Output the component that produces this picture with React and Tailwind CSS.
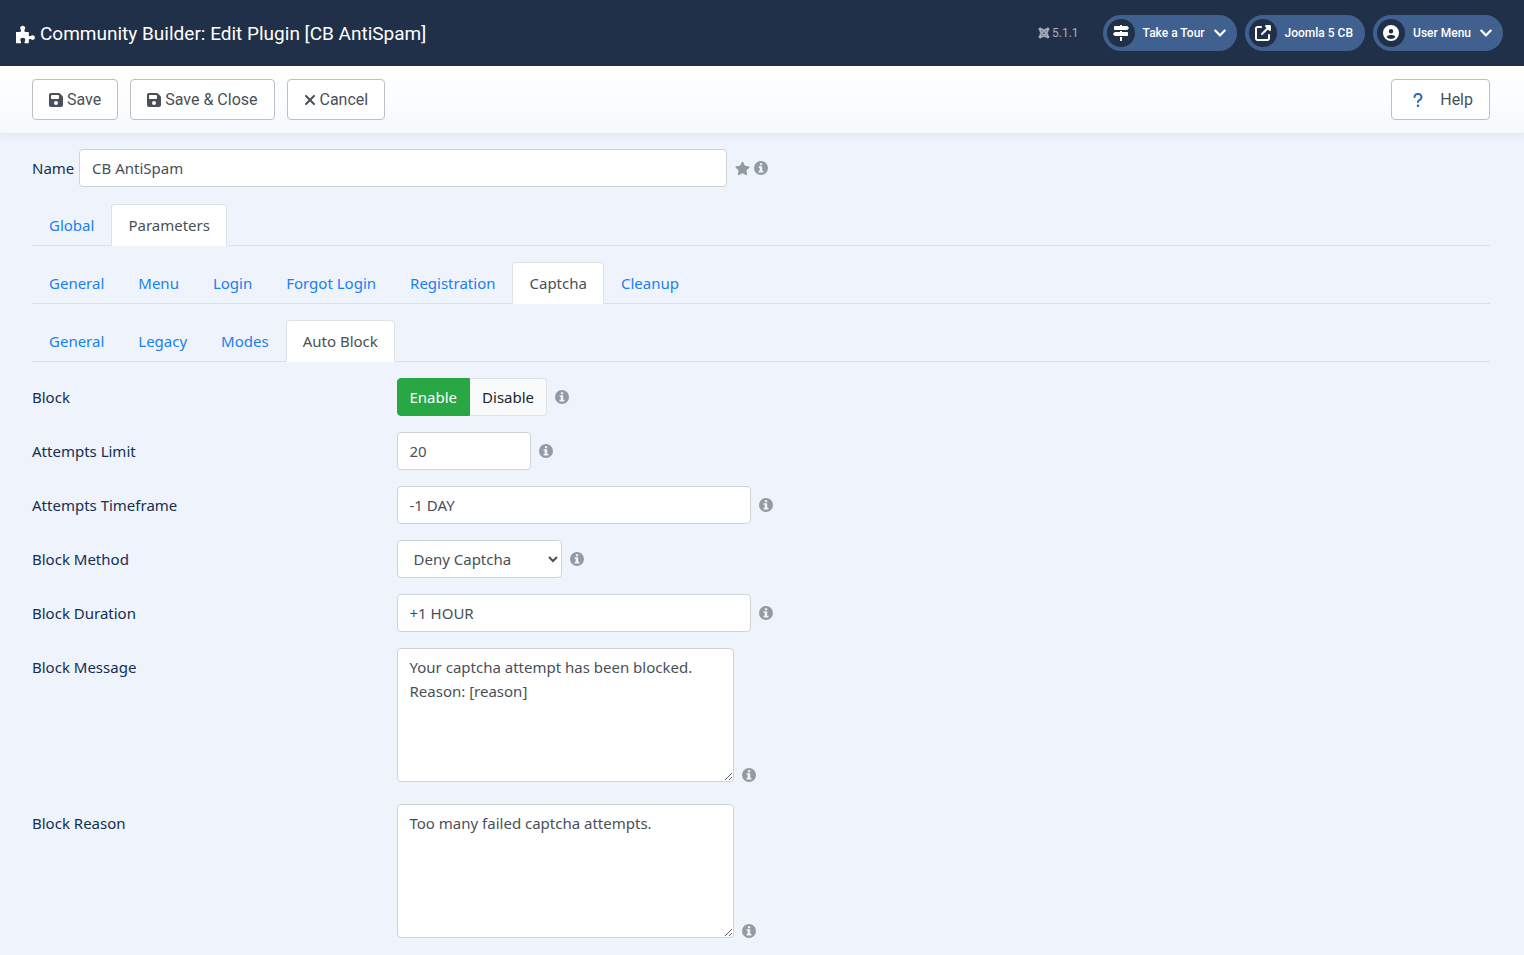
import { FaChevronDown, FaJoomla, FaMapSigns, FaStar } from "react-icons/fa";
import {
  FaCircleUser,
  FaFloppyDisk,
  FaQuestion,
  FaUpRightFromSquare,
  FaXmark,
} from "react-icons/fa6";

const mainTabs = ["Global", "Parameters"];
const parameterTabs = [
  "General",
  "Menu",
  "Login",
  "Forgot Login",
  "Registration",
  "Captcha",
  "Cleanup",
];
const captchaTabs = ["General", "Legacy", "Modes", "Auto Block"];

const fieldClass =
  "h-[38px] rounded border border-[#ced4da] bg-white px-3 text-[#495057]";

function InfoIcon() {
  return (
    <svg
      viewBox="0 0 14 14"
      fill="currentColor"
      fillRule="evenodd"
      className="size-3.5 shrink-0 text-[#939ba2]"
      aria-hidden="true"
    >
      <path d="M7 0a7 7 0 1 1 0 14A7 7 0 0 1 7 0ZM5.9 2.2v2h2.3v-2ZM4.6 5.3v1.5h1.1v3H4.6v1.6h4.8V9.8H8.2V5.3Z" />
    </svg>
  );
}

function PuzzleIcon() {
  return (
    <svg
      viewBox="0 0 20 20"
      fill="currentColor"
      className="size-5"
      aria-hidden="true"
    >
      <path d="M0 8h3.2c1.6 0 2.2-.7 1.8-1.7-.4-.8-.8-1.3-.8-2.2C4.200 2.700 5.300 1.800 6.700 1.800s2.500.9 2.500 2.300c0 .9-.5 1.400-.8 2.200C8 7.300 8.600 8 10 8h2.800v2.900c0 1.200.7 1.600 1.700 1.200.7-.3 1.200-.8 2.100-.8 1.400 0 2.300 1 2.300 2.300s-.9 2.300-2.300 2.300c-.9 0-1.400-.5-2.100-.8-1-.4-1.700.1-1.700 1.200V19.200H8.600v-1.100c0-.9.700-1.300.7-2.300 0-1.300-1.100-2.100-2.500-2.100s-2.500.8-2.500 2.100c0 1 .7 1.400.7 2.300v1.100H0Z" />
    </svg>
  );
}

function HeaderPill({ icon, label, hasMenu }) {
  return (
    <button
      type="button"
      className="flex h-9 items-center rounded-full bg-[#40618f] pr-2.5 pl-1 text-xs font-medium text-white"
    >
      <span className="flex size-7 items-center justify-center rounded-full bg-[#1f3048]">
        {icon}
      </span>
      <span className="mx-2">{label}</span>
      {hasMenu && <FaChevronDown className="size-3.5" />}
    </button>
  );
}

function HeaderLink({ icon, label }) {
  return (
    <a
      href="#"
      className="flex h-9 items-center gap-2 rounded-full bg-[#40618f] pr-3 pl-1 text-xs font-medium text-white"
    >
      <span className="flex size-7 items-center justify-center rounded-full bg-[#1f3048]">
        {icon}
      </span>
      {label}
    </a>
  );
}

function ToolbarButton({ children }) {
  return (
    <button
      type="button"
      className="flex h-[41px] items-center gap-1 rounded border border-[#bcc0c5] bg-white px-4 text-[#495057]"
    >
      {children}
    </button>
  );
}

function Tabs({ tabs, active, label }) {
  return (
    <nav aria-label={label} className="flex border-b border-[#dbdfe6]">
      {tabs.map((tab) => (
        <a
          key={tab}
          href="#"
          className={
            tab === active
              ? "-mb-px rounded-t border border-[#dee2e6] border-b-white bg-white px-4 py-2 text-[#495057]"
              : "-mb-px border border-transparent px-4 py-2 text-[#1a7ff0]"
          }
        >
          {tab}
        </a>
      ))}
    </nav>
  );
}

function FormRow({ id, label, children }) {
  return (
    <div className="flex">
      <label htmlFor={id} className="w-1/4 shrink-0 pt-[7px]">
        {label}
      </label>
      <div className="flex items-center gap-2">{children}</div>
    </div>
  );
}

function TextareaRow({ id, label, value }) {
  return (
    <div className="flex pb-1.5">
      <label htmlFor={id} className="w-1/4 shrink-0 pt-[7px]">
        {label}
      </label>
      <div className="flex items-end gap-2">
        <textarea
          id={id}
          defaultValue={value}
          className="block h-[134px] w-[337px] rounded border border-[#ced4da] bg-white px-3 py-1.5 text-[#495057]"
        />
        <InfoIcon />
      </div>
    </div>
  );
}

function App() {
  return (
    <div className="min-h-screen bg-[#eff3fb] font-['Noto_Sans','Open_Sans',sans-serif] text-[15px] leading-6 text-[#132f53]">
      {/* ---------------------- Header ------------------------- */}
      <header className="flex h-[66px] items-center justify-between bg-[#1f3048] pr-[21px] pl-4 font-[Roboto,sans-serif] text-white">
        <h1 className="flex items-center gap-1 pt-0.5 text-[19px]">
          <PuzzleIcon />
          Community Builder: Edit Plugin [CB AntiSpam]
        </h1>
        <div className="flex items-center gap-2">
          <span className="mr-4 flex items-center gap-0.5 text-xs text-[#a9b1bb]">
            <FaJoomla className="size-3 stroke-current stroke-20" />
            5.1.1
          </span>
          <HeaderPill
            icon={<FaMapSigns className="size-4" />}
            label="Take a Tour"
            hasMenu
          />
          <HeaderLink
            icon={<FaUpRightFromSquare className="size-4" />}
            label="Joomla 5 CB"
          />
          <HeaderPill
            icon={<FaCircleUser className="size-4" />}
            label="User Menu"
            hasMenu
          />
        </div>
      </header>

      {/* ---------------------- Toolbar ------------------------- */}
      <div className="flex h-[67px] items-center justify-between bg-linear-to-b from-white to-[#f6f9fc] pr-[34px] pl-8 font-[Roboto,sans-serif] text-base shadow-[0_2px_8px_rgba(31,48,72,0.08)]">
        <div className="flex gap-3">
          <ToolbarButton>
            <FaFloppyDisk className="h-4 w-3.5" />
            Save
          </ToolbarButton>
          <ToolbarButton>
            <FaFloppyDisk className="h-4 w-3.5" />
            Save &amp; Close
          </ToolbarButton>
          <ToolbarButton>
            <FaXmark className="h-4 w-3" />
            Cancel
          </ToolbarButton>
        </div>
        <ToolbarButton>
          <span className="flex w-7 items-center pl-1">
            <FaQuestion className="h-4 w-3 text-[#2a69b8]" />
          </span>
          Help
        </ToolbarButton>
      </div>

      {/* ---------------------- Plugin form ------------------------- */}
      <main className="flex flex-col gap-4 pt-4 pr-[34px] pb-4 pl-8">
        <div className="flex items-center pb-px">
          <label htmlFor="name" className="w-[47px]">
            Name
          </label>
          <input
            id="name"
            type="text"
            defaultValue="CB AntiSpam"
            className={`${fieldClass} w-[648px]`}
          />
          <div className="ml-2 flex items-center gap-1">
            <FaStar className="size-[15px] text-[#939ba2]" />
            <InfoIcon />
          </div>
        </div>

        <Tabs tabs={mainTabs} active="Parameters" label="Plugin" />
        <Tabs tabs={parameterTabs} active="Captcha" label="Parameters" />
        <Tabs tabs={captchaTabs} active="Auto Block" label="Captcha" />

        <div className="flex">
          <span id="block-label" className="w-1/4 shrink-0 pt-[7px]">
            Block
          </span>
          <div className="flex items-center gap-2">
            <div
              role="group"
              aria-labelledby="block-label"
              className="flex h-[38px]"
            >
              <button
                type="button"
                className="rounded-l border border-[#28a745] bg-[#28a745] px-3 text-white"
              >
                Enable
              </button>
              <button
                type="button"
                className="rounded-r border border-l-0 border-[#dfe3e9] bg-[#f8fafc] px-3 text-[#212529]"
              >
                Disable
              </button>
            </div>
            <InfoIcon />
          </div>
        </div>
        <FormRow id="attempts-limit" label="Attempts Limit">
          <input
            id="attempts-limit"
            type="text"
            defaultValue="20"
            className={`${fieldClass} w-[134px]`}
          />
          <InfoIcon />
        </FormRow>
        <FormRow id="attempts-timeframe" label="Attempts Timeframe">
          <input
            id="attempts-timeframe"
            type="text"
            defaultValue="-1 DAY"
            className={`${fieldClass} w-[354px]`}
          />
          <InfoIcon />
        </FormRow>
        <FormRow id="block-method" label="Block Method">
          <select id="block-method" className={`${fieldClass} w-[165px]`}>
            <option>Deny Captcha</option>
          </select>
          <InfoIcon />
        </FormRow>
        <FormRow id="block-duration" label="Block Duration">
          <input
            id="block-duration"
            type="text"
            defaultValue="+1 HOUR"
            className={`${fieldClass} w-[354px]`}
          />
          <InfoIcon />
        </FormRow>
        <TextareaRow
          id="block-message"
          label="Block Message"
          value="Your captcha attempt has been blocked. Reason: [reason]"
        />
        <TextareaRow
          id="block-reason"
          label="Block Reason"
          value="Too many failed captcha attempts."
        />
      </main>
    </div>
  );
}

export default App;
